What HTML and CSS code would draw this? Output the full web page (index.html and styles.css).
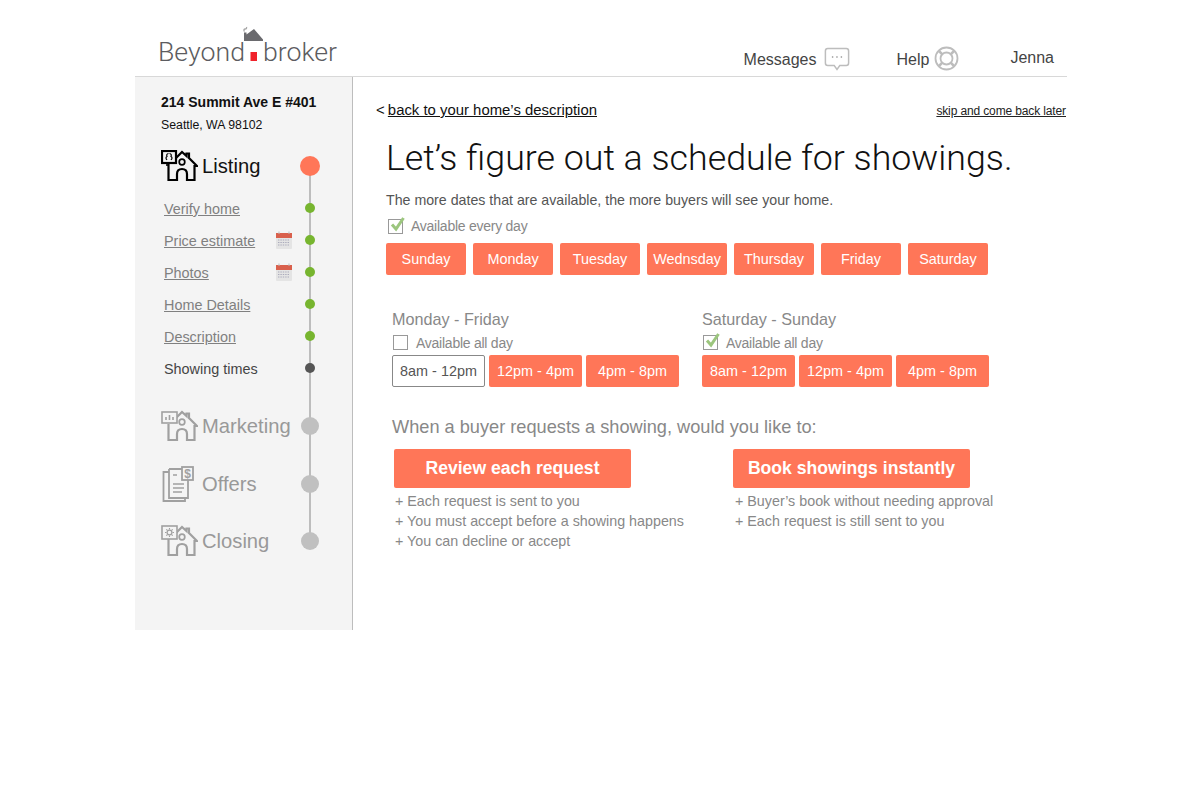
FILE: index.html
```html
<!DOCTYPE html>
<html>
<head>
  <meta charset="utf-8">
  <title>Beyond Broker - Showing times</title>
  <link rel="stylesheet" href="styles.css">
</head>
<body>
  <div class="container">
    <header class="topbar">
      <div class="logo">
        <span>Beyond</span>
        <svg class="logo-house" width="23" height="36" viewBox="0 0 23 36">
          <path d="M2.5 5.5 Q1 3.5 3 3 Q5 3 4.5 1" stroke="#a8a8a8" stroke-width="1.3" fill="none"/>
          <path d="M2 15 V6.5 H4.5 V8.5 L12 3 L21 13.5 V15 Z" fill="#6a6a6e"/>
          <rect x="8.5" y="26" width="6.5" height="9" fill="#f0222b"/>
        </svg>
        <span>broker</span>
      </div>
      <nav class="topnav">
        <a class="topnav-item topnav-messages">Messages
          <svg width="26" height="24" viewBox="0 0 28 24" preserveAspectRatio="none" fill="none">
            <path d="M4 1.5 H24 Q26.5 1.5 26.5 4 V16 Q26.5 18.5 24 18.5 H17 L14 22.5 L11 18.5 H4 Q1.5 18.5 1.5 16 V4 Q1.5 1.5 4 1.5 Z" stroke="#bdbdbd" stroke-width="1.6"/>
            <path d="M8.5 10 h1.5 M13.2 10 h1.5 M18 10 h1.5" stroke="#9a9a9a" stroke-width="1.4"/>
          </svg>
        </a>
        <a class="topnav-item topnav-help">Help
          <svg width="25" height="25" viewBox="0 0 25 25" fill="none" stroke="#bdbdbd">
            <circle cx="12.5" cy="12.5" r="11" stroke-width="1.8"/>
            <circle cx="12.5" cy="12.5" r="6" stroke-width="1.8"/>
            <path d="M5 5 L8.3 8.3 M20 5 L16.7 8.3 M5 20 L8.3 16.7 M20 20 L16.7 16.7" stroke-width="2.6"/>
          </svg>
        </a>
        <a class="topnav-item topnav-user">Jenna</a>
      </nav>
    </header>

    <div class="main">
      <aside class="sidebar">
        <div class="address">
          <strong>214 Summit Ave E #401</strong>
          <span>Seattle, WA 98102</span>
        </div>
        <div class="timeline-line"></div>

        <div class="step step-active">
          <svg class="step-icon" width="37" height="32" viewBox="0 0 37 32" fill="none" stroke="#000" stroke-width="2.2">
            <path d="M7.5 14 V30 H16 V24 Q16 19 21 19 Q26 19 26 24 V30 H33.5 V16 H36 L28 8 V3.5 H25.5 V6 L21 2 L14 9"/>
            <circle cx="21" cy="12" r="2.8" stroke-width="1.7"/>
            <rect x="1" y="1" width="14" height="12" fill="#f4f4f4"/>
            <path d="M6 16 V13" stroke-width="1.6"/>
            <path d="M6 10 Q4 7.5 6 6.5 Q5 4 7.5 3.5 M10 10 Q12 7.5 10 6.5 Q11 4 8.5 3.5" stroke-width="1.2"/>
          </svg>
          <span class="step-label">Listing</span>
          <span class="dot dot-big dot-coral"></span>
        </div>

        <ul class="substeps">
          <li><a>Verify home</a><span class="dot dot-green"></span></li>
          <li><a>Price estimate</a>
            <svg class="cal" width="16" height="18" viewBox="0 0 16 18">
              <rect x="0" y="2" width="16" height="16" rx="1" fill="#e4e4e4"/>
              <rect x="0" y="2" width="16" height="5" fill="#d9604c"/>
              <path d="M3 0.5 V3 M13 0.5 V3" stroke="#bbb" stroke-width="1"/>
              <path d="M2 9 H14 M2 11.5 H14 M2 14 H14" stroke="#aab" stroke-width="1.2" stroke-dasharray="1.4 1"/>
            </svg>
            <span class="dot dot-green"></span></li>
          <li><a>Photos</a>
            <svg class="cal" width="16" height="18" viewBox="0 0 16 18">
              <rect x="0" y="2" width="16" height="16" rx="1" fill="#e4e4e4"/>
              <rect x="0" y="2" width="16" height="5" fill="#d9604c"/>
              <path d="M3 0.5 V3 M13 0.5 V3" stroke="#bbb" stroke-width="1"/>
              <path d="M2 9 H14 M2 11.5 H14 M2 14 H14" stroke="#aab" stroke-width="1.2" stroke-dasharray="1.4 1"/>
            </svg>
            <span class="dot dot-green"></span></li>
          <li><a>Home Details</a><span class="dot dot-green"></span></li>
          <li><a>Description</a><span class="dot dot-green"></span></li>
          <li class="current"><span>Showing times</span><span class="dot dot-dark"></span></li>
        </ul>

        <div class="step step-marketing">
          <svg class="step-icon" width="37" height="32" viewBox="0 0 37 32" fill="none" stroke="#a0a0a0" stroke-width="2.2">
            <path d="M7.5 14 V30 H16 V24 Q16 19 21 19 Q26 19 26 24 V30 H33.5 V16 H36 L28 8 V3.5 H25.5 V6 L21 2 L14 9"/>
            <circle cx="21" cy="12" r="2.8" stroke-width="1.7"/>
            <rect x="1" y="2" width="15" height="11" fill="#f4f4f4" stroke-width="1.6"/>
            <path d="M5 10 V7 M8.5 10 V5 M12 10 V7" stroke-width="1.6"/>
          </svg>
          <span class="step-label">Marketing</span>
          <span class="dot dot-big dot-grey"></span>
        </div>

        <div class="step step-offers">
          <svg class="step-icon" width="37" height="36" viewBox="0 0 37 36" fill="none" stroke="#a0a0a0" stroke-width="1.8">
            <path d="M8 6 H2.5 V35 H24 V32"/>
            <path d="M8 3 H22 M8 3 V32 H27 V13"/>
            <path d="M12 9 H16 M12 18 H23 M12 22 H23 M12 26 H21" stroke-width="1.5"/>
            <rect x="21" y="1" width="11" height="13" fill="#f4f4f4"/>
            <text x="26.5" y="12" text-anchor="middle" class="dollar">$</text>
          </svg>
          <span class="step-label">Offers</span>
          <span class="dot dot-big dot-grey"></span>
        </div>

        <div class="step step-closing">
          <svg class="step-icon" width="37" height="32" viewBox="0 0 37 32" fill="none" stroke="#a0a0a0" stroke-width="2.2">
            <path d="M7.5 14 V30 H16 V24 Q16 19 21 19 Q26 19 26 24 V30 H33.5 V16 H36 L28 8 V3.5 H25.5 V6 L21 2 L14 9"/>
            <circle cx="21" cy="12" r="2.8" stroke-width="1.7"/>
            <rect x="1" y="1" width="15" height="13" fill="#f4f4f4" stroke-width="1.6"/>
            <circle cx="8.5" cy="7.5" r="2.4" stroke-width="1.2"/>
            <path d="M8.5 3 V4.5 M8.5 10.5 V12 M4 7.5 H5.5 M11.5 7.5 H13 M5.3 4.3 L6.4 5.4 M10.6 9.6 L11.7 10.7 M5.3 10.7 L6.4 9.6 M10.6 5.4 L11.7 4.3" stroke-width="1.1"/>
          </svg>
          <span class="step-label">Closing</span>
          <span class="dot dot-big dot-grey"></span>
        </div>
      </aside>

      <main class="content">
        <div class="content-nav">
          <span class="back">&lt; <a>back to your home’s description</a></span>
          <a class="skip">skip and come back later</a>
        </div>

        <div class="content-body">
          <h1>Let’s figure out a schedule for showings.</h1>
          <p class="intro">The more dates that are available, the more buyers will see your home.</p>

          <div class="check check-every">
            <span class="box checked">
              <svg width="17" height="17" viewBox="0 0 17 17" fill="none"><path d="M3 7.5 L7 12 L14.5 1" stroke="#9cc67e" stroke-width="3"/></svg>
            </span>
            Available every day
          </div>

          <div class="days">
            <a class="pill day">Sunday</a>
            <a class="pill day">Monday</a>
            <a class="pill day">Tuesday</a>
            <a class="pill day">Wednsday</a>
            <a class="pill day">Thursday</a>
            <a class="pill day">Friday</a>
            <a class="pill day">Saturday</a>
          </div>

          <div class="times">
            <div class="time-group">
              <h3>Monday - Friday</h3>
              <div class="check">
                <span class="box"></span>
                Available all day
              </div>
              <div class="slots">
                <a class="pill slot off">8am - 12pm</a>
                <a class="pill slot">12pm - 4pm</a>
                <a class="pill slot">4pm - 8pm</a>
              </div>
            </div>
            <div class="time-group">
              <h3>Saturday - Sunday</h3>
              <div class="check">
                <span class="box checked">
                  <svg width="17" height="17" viewBox="0 0 17 17" fill="none"><path d="M3 7.5 L7 12 L14.5 1" stroke="#9cc67e" stroke-width="3"/></svg>
                </span>
                Available all day
              </div>
              <div class="slots">
                <a class="pill slot">8am - 12pm</a>
                <a class="pill slot">12pm - 4pm</a>
                <a class="pill slot">4pm - 8pm</a>
              </div>
            </div>
          </div>

          <h2>When a buyer requests a showing, would you like to:</h2>
          <div class="options">
            <div class="option">
              <a class="pill option-btn">Review each request</a>
              <ul>
                <li>Each request is sent to you</li>
                <li>You must accept before a showing happens</li>
                <li>You can decline or accept</li>
              </ul>
            </div>
            <div class="option option-instant">
              <a class="pill option-btn">Book showings instantly</a>
              <ul>
                <li>Buyer’s book without needing approval</li>
                <li>Each request is still sent to you</li>
              </ul>
            </div>
          </div>
        </div>
      </main>
    </div>
  </div>
</body>
</html>
```

FILE: styles.css
```css
/* Basic reset and styling */
body {
  margin: 0;
  background-color: #fff;
  font-family: "Liberation Sans", Arial, sans-serif;
  color: #555;
}
h1, h2, h3, p, ul {
  margin: 0;
  padding: 0;
}
ul {
  list-style: none;
}
.container {
  width: 932px;
  margin-left: 135px;
}

/* Header */
.topbar {
  height: 76px;
  border-bottom: 1px solid #d8d8d8;
  display: flex;
  justify-content: space-between;
}
.logo {
  display: flex;
  align-items: flex-start;
  margin: 26px 0 0 23px;
  font-family: Roboto, "Liberation Sans", sans-serif;
  font-weight: 300;
  font-size: 26.7px;
  color: #5c5c60;
  line-height: 26px;
  padding-top: 13px;
}
.logo-house {
  margin: -13px -2px 0 -3px;
}
.topnav {
  display: flex;
  align-items: flex-start;
  padding-top: 46px;
  font-size: 16px;
  color: #444;
}
.topnav-item {
  display: flex;
  align-items: center;
  gap: 7px;
  height: 28px;
}
.topnav-messages svg {
  margin-bottom: 2px;
}
.topnav-help {
  margin-left: 47px;
  gap: 5px;
}
.topnav-help svg {
  margin-bottom: 4px;
}
.topnav-user {
  margin-left: 51px;
  margin-right: 13px;
  margin-top: -2px;
}

/* Sidebar */
.main {
  display: flex;
}
.sidebar {
  position: relative;
  width: 217px;
  height: 553px;
  flex: none;
  background-color: #f4f4f4;
  border-right: 1px solid #bdbdbd;
}
.address {
  padding: 17px 0 0 26px;
  color: #111;
  height: 51px;
}
.address strong {
  display: block;
  font-size: 14px;
  line-height: 17px;
}
.address span {
  display: block;
  font-size: 12.3px;
  line-height: 14px;
  margin-top: 7px;
}
.timeline-line {
  position: absolute;
  left: 174px;
  top: 90px;
  width: 2px;
  height: 374px;
  background-color: #bdbdbd;
}
.step {
  display: flex;
  align-items: center;
  height: 40px;
  padding-left: 26px;
  position: relative;
  font-size: 20.2px;
  color: #999;
}
.step-active {
  color: #111;
  margin-top: 1px;
}
.step-icon {
  flex: none;
}
.step-label {
  margin-left: 4px;
  flex: 1;
}
.step-marketing {
  margin-top: 22px;
}
.step-offers {
  margin-top: 18px;
}
.step-closing {
  margin-top: 17px;
}
.dot {
  position: relative;
  display: block;
  flex: none;
  border-radius: 50%;
  width: 10px;
  height: 10px;
}
.dot-big {
  width: 18px;
  height: 18px;
  margin-right: 33px;
}
.step-active .dot-big {
  width: 20px;
  height: 20px;
  margin-right: 32px;
}
.dot-coral {
  background-color: #ff7658;
}
.dot-grey {
  background-color: #c0c0c0;
}
.dot-green {
  background-color: #77b52f;
}
.dot-dark {
  background-color: #555;
}
.substeps {
  margin-top: 6px;
}
.substeps li {
  display: flex;
  align-items: center;
  height: 32px;
  padding: 0 37px 0 29px;
  font-size: 14.4px;
  color: #808080;
}
.substeps a {
  text-decoration: underline;
  margin-right: auto;
  padding-top: 2px;
}
.substeps .current {
  color: #444;
}
.substeps .current span:first-child {
  margin-right: auto;
  padding-top: 2px;
}
.cal {
  margin-right: 13px;
}
.dollar {
  font-family: "Liberation Sans", sans-serif;
  font-size: 12px;
  fill: #a0a0a0;
  stroke: none;
  font-weight: bold;
}

/* Content */
.content {
  flex: 1;
  min-width: 0;
}
.content-nav {
  display: flex;
  justify-content: space-between;
  align-items: baseline;
  padding: 25px 1px 0 23px;
  color: #111;
}
.back {
  font-size: 14.9px;
}
.back a {
  margin-left: -1px;
}
.back a, .skip {
  text-decoration: underline;
}
.skip {
  font-size: 12px;
  letter-spacing: -0.13px;
  color: #222;
}
.content-body {
  padding: 18px 0 0 33px;
}
h1 {
  font-family: Roboto, "Liberation Sans", sans-serif;
  font-size: 35.75px;
  line-height: 44px;
  font-weight: 300;
  color: #111;
}
.intro {
  font-size: 14.2px;
  margin-top: 11px;
  line-height: 18px;
  color: #555;
}
.check {
  display: flex;
  align-items: center;
  height: 22px;
  font-size: 14px;
  letter-spacing: -0.25px;
  color: #888;
}
.check-every {
  margin: 6px 0 6px 2px;
}
.box {
  position: relative;
  display: block;
  width: 13px;
  height: 13px;
  border: 1px solid #999;
  margin-right: 8px;
  flex: none;
}
.box svg {
  position: absolute;
  left: 0;
  top: -3px;
}
.pill {
  display: flex;
  align-items: center;
  justify-content: center;
  box-sizing: border-box;
  background-color: #ff7658;
  color: #fff;
  border-radius: 2px;
  font-size: 14.4px;
}
.days {
  display: flex;
  gap: 7px;
}
.day {
  width: 80px;
  height: 32px;
}
.times {
  display: flex;
  margin: 34px 0 0 6px;
}
.time-group {
  width: 310px;
}
.time-group h3 {
  font-size: 16.2px;
  font-weight: normal;
  line-height: 20px;
  color: #888;
}
.time-group .check {
  margin: 3px 0 2px 1px;
  height: 21px;
}
.slots {
  display: flex;
  gap: 4px;
}
.slot {
  width: 93px;
  height: 32px;
}
.slot.off {
  background-color: #fff;
  border: 1px solid #888;
  color: #555;
}
h2 {
  font-size: 18.2px;
  font-weight: normal;
  line-height: 22px;
  color: #888;
  margin: 29px 0 0 6px;
}
.options {
  display: flex;
  margin: 11px 0 0 8px;
}
.option {
  width: 339px;
  flex: none;
}
.option-btn {
  width: 237px;
  height: 39px;
  font-size: 17.6px;
  font-weight: bold;
}
.option ul {
  margin-top: 3px;
  font-size: 14.3px;
  color: #888;
}
.option li {
  line-height: 20px;
  padding-left: 1px;
}
.option li::before {
  content: "+ ";
}
.option-instant ul {
  padding-left: 1px;
}
```
